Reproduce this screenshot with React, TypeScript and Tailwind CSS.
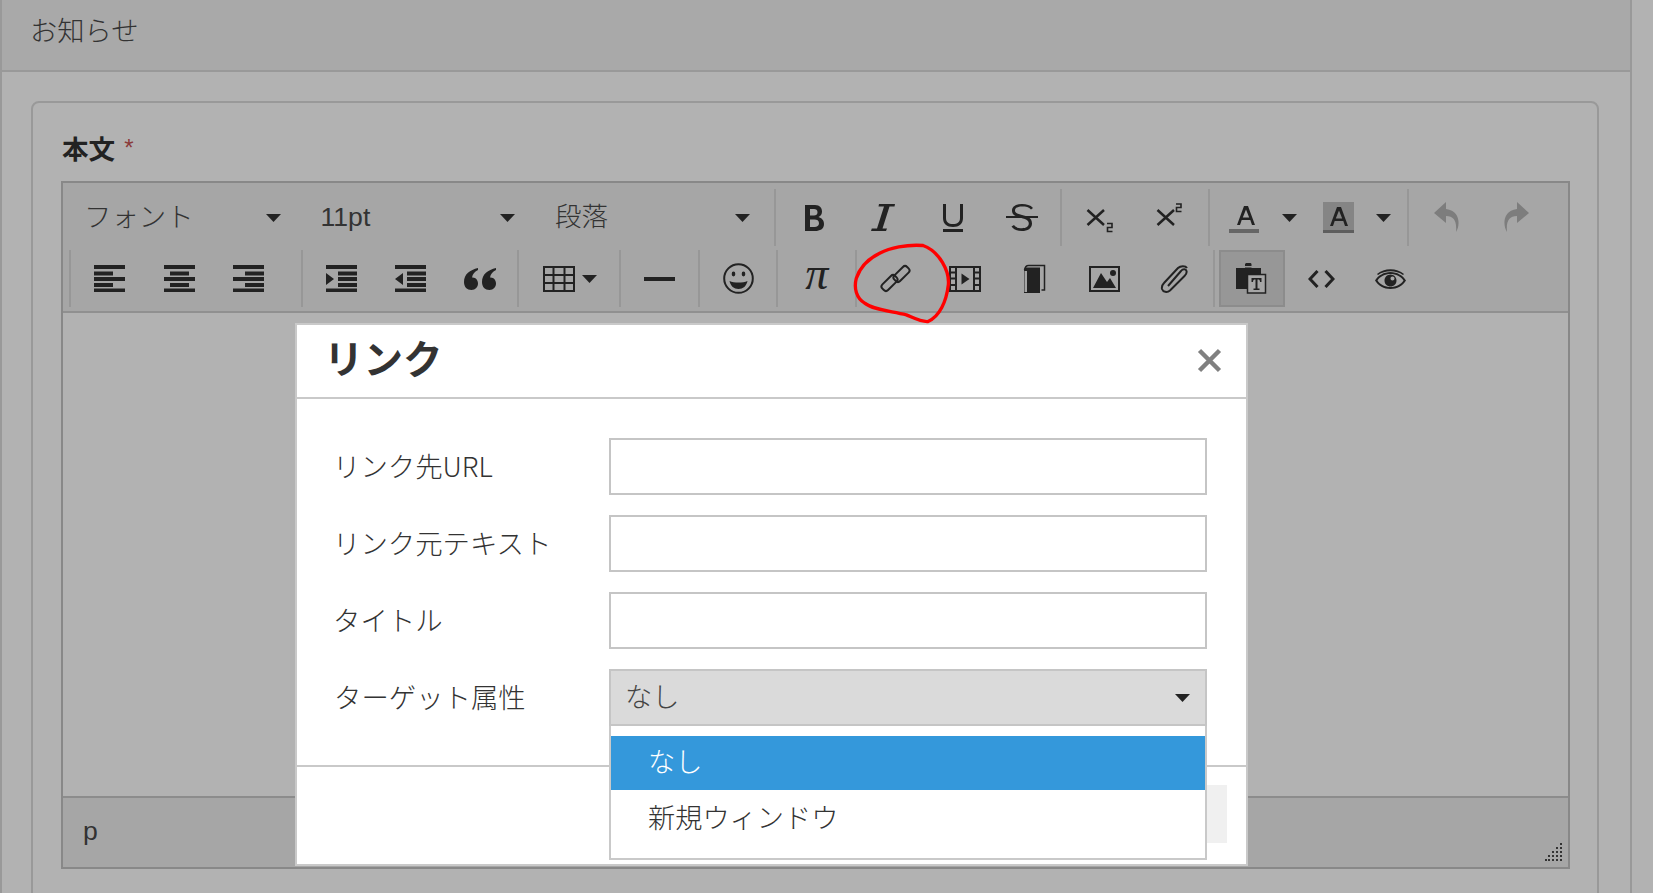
const JP = "font-['Noto_Sans_CJK_JP','Liberation_Sans',sans-serif]";

function Ic({ w, h, vb, children }: { w: number; h: number; vb?: string; children: React.ReactNode }) {
  return (
    <svg width={w} height={h} viewBox={vb ?? `0 0 ${w} ${h}`} fill="#222">
      {children}
    </svg>
  );
}

function Tb({ children, className = "w-[69.5px]" }: { children?: React.ReactNode; className?: string }) {
  return <div className={`${className} h-[57px] flex items-center justify-center shrink-0`}>{children}</div>;
}

function Sep({ className = "mx-1" }: { className?: string }) {
  return <div className={`${className} w-[2px] h-[57px] bg-[#979797] shrink-0`} />;
}

function Caret({ c = "" }: { c?: string }) {
  return (
    <svg width="15" height="8" viewBox="0 0 15 8" className={c}>
      <path d="M0 0H15L7.5 8Z" fill="#222" />
    </svg>
  );
}

function Sel({ label, c = "text-[26.6px] pl-[22px]" }: { label: string; c?: string }) {
  return (
    <div className={`${c} w-[234.5px] h-[57px] shrink-0 flex items-center justify-between pr-[18px] text-[#333] font-light`}>
      <span>{label}</span>
      <Caret />
    </div>
  );
}

const Lines = ({ d }: { d: string }) => (
  <Ic w={31} h={27}>
    <path d={d} />
  </Ic>
);

function Field({ label }: { label: string }) {
  return (
    <div className="flex items-center h-[57px] mb-[20px]">
      <div className="w-[312px] pl-[36px] text-[27.4px] leading-none text-[#333] font-light whitespace-nowrap pb-[2px]">{label}</div>
      <div className="border-2 w-[598px] h-[57px] border-[#c5c5c5] bg-white shrink-0" />
    </div>
  );
}

function AGlyph() {
  return <path fillRule="evenodd" d="M7 0H11L18 19H15L13.300 14H4.700L3 19H0ZM9 3.500L5.800 11.500H12.200Z" />;
}

export default function App() {
  return (
    <div className={`${JP} relative w-[1653px] h-[893px] overflow-hidden bg-[#b2b2b2] border-l-2 border-[#999]`}>
      <div className="w-[1630px] h-full border-r-2 border-[#999]">
        <div className="h-[72px] bg-[#a9a9a9] border-b-2 border-[#999] flex items-center pl-[28px] pb-[11px] text-[27.3px] text-[#333] font-light">
          お知らせ
        </div>
        <div className="pl-[29px] pt-[29px]">
          <div className="w-[1568px] h-[900px] rounded-t-lg border-2 border-[#999] pl-[28px] pt-[26px]">
            <div className="h-[38px] flex items-center pl-px text-[26.6px] font-bold text-[#222]">
              本文<span className="text-[#8a3a3a] font-normal text-[24px] ml-[9px] font-['Liberation_Sans']">*</span>
            </div>
            <div className="mt-[14px] w-[1509px] border-2 border-[#888]">
              <div className="h-[130px] bg-[#a6a6a6] border-b-2 border-[#909090] pt-[6px] flex flex-col gap-[4px]">
                <div className="flex items-center pl-px font-['Liberation_Sans','Noto_Sans_CJK_JP',sans-serif]">
                  <Sel label="フォント" c="text-[27.4px] pl-[20px]" />
                  <Sel label="11pt" />
                  <Sel label="段落" />
                  <Sep className="ml-[6.5px] mr-[3px]" />
                  <Tb>
                    <Ic w={20} h={28}>
                      <path fillRule="evenodd" d="M1 1H11C16 1 18 4 18 7.5C18 10 17 12 14.5 13C17.5 14 20 16 20 20C20 25 16 27 11 27H1ZM6 5V11.5H10C12 11.5 13.5 10.500 13.500 8.200C13.500 6 12 5 10 5ZM6 15.500V23H10.500C13 23 15 22 15 19.300C15 16.500 13 15.500 10.500 15.500Z" />
                    </Ic>
                  </Tb>
                  <Tb>
                    <Ic w={24} h={27}>
                      <path d="M8 0H24L23.500 2.500H18.500L11.500 24.500H16L15 27H0L.8 24.500H6L13 2.500H7.500Z" />
                    </Ic>
                  </Tb>
                  <Tb>
                    <Ic w={20} h={28}>
                      <path d="M0 0H3V14C3 18 5.500 20 10 20C14.500 20 17 18 17 14V0H20V14C20 20 16 23 10 23C4 23 0 20 0 14ZM0 25H20V28.500H0Z" />
                    </Ic>
                  </Tb>
                  <Tb>
                    <Ic w={32} h={28}>
                      <path d="M25 5.500C23 3 20 2.500 16 2.500C12 2.500 9 4 9 6.500C9 9.500 13 10 16 11C21 12 26 13.500 26 19.500C26 24.500 21.500 27 16 27C11.500 27 8 26 5.500 22.500L8 21C9.800 23.500 12.500 24.200 16 24.200C20 24.200 22.800 22.600 22.800 19.500C22.800 16 19 15 15.500 14C11 13 6 11.500 6 6.500C6 2 10.500 0 16 0C20.500 0 24.500 1 27 4Z" />
                      <rect x="0" y="12" width="32" height="2" />
                    </Ic>
                  </Tb>
                  <Sep className="ml-[3px] mr-[3px]" />
                  <Tb>
                    <Ic w={27} h={30}>
                      <path d="M1.500 7L18 22M18 7L1.500 22" stroke="#222" strokeWidth="2.500" fill="none" />
                      <path d="M21 20.500H26V24.500H21.500V28.500H26.500" stroke="#222" strokeWidth="1.600" fill="none" />
                    </Ic>
                  </Tb>
                  <Tb>
                    <Ic w={26} h={30}>
                      <path d="M1.500 7L18 22M18 7L1.500 22" stroke="#222" strokeWidth="2.500" fill="none" />
                      <path d="M20 1H25V4.500H20.500V8.500H25.500" stroke="#222" strokeWidth="1.600" fill="none" />
                    </Ic>
                  </Tb>
                  <Sep className="ml-[4px] mr-[3px]" />
                  <div className="w-[95px] h-[57px] shrink-0 flex items-center pl-[16px] gap-[23px]">
                    <Ic w={30} h={31}>
                      <g transform="translate(8 4)">
                        <AGlyph />
                      </g>
                      <rect y="27" width="30" height="4" fill="#666" />
                    </Ic>
                    <Caret />
                  </div>
                  <div className="w-[97px] h-[57px] shrink-0 flex items-center pl-[15px] gap-[22px]">
                    <div className="w-[31px] h-[31px] bg-[#858585]">
                      <svg width="31" height="31" viewBox="0 0 31 31" fill="#222">
                        <g transform="translate(7 5)">
                          <AGlyph />
                        </g>
                        <rect y="28" width="31" height="3" fill="#5e5e5e" />
                      </svg>
                    </div>
                    <Caret />
                  </div>
                  <Sep className="ml-[2px] mr-[3px]" />
                  <Tb>
                    <Ic w={26} h={31}>
                      <path d="M12 0L0 11L12 21V14C20 14 23 19 22 30C26 24 27 9 12 7Z" fill="#7d7d7d" />
                    </Ic>
                  </Tb>
                  <Tb>
                    <Ic w={26} h={31}>
                      <path d="M14 0L26 11L14 21V14C6 14 3 19 4 30C0 24 -1 9 14 7Z" fill="#7d7d7d" />
                    </Ic>
                  </Tb>
                </div>
                <div className="flex items-center pl-[6px] font-['Liberation_Serif','Noto_Sans_CJK_JP',serif]">
                  <Sep className="ml-0 mr-[4px]" />
                  <Tb>
                    <Lines d="M0 0H31V4H0ZM0 6.500H19V10.500H0ZM0 12H31V16H0ZM0 18H19V22H0ZM0 23.500H31V27.500H0Z" />
                  </Tb>
                  <Tb>
                    <Lines d="M0 0H31V4H0ZM6 6.500H25V10.500H6ZM0 12H31V16H0ZM6 18H25V22H6ZM0 23.500H31V27.500H0Z" />
                  </Tb>
                  <Tb>
                    <Lines d="M0 0H31V4H0ZM12 6.500H31V10.500H12ZM0 12H31V16H0ZM12 18H31V22H12ZM0 23.500H31V27.500H0Z" />
                  </Tb>
                  <Sep className="ml-[17px] mr-[4px]" />
                  <Tb>
                    <Lines d="M0 0H31V4H0ZM12 6.500H31V10.500H12ZM12 12H31V16H12ZM12 18H31V22H12ZM0 23.500H31V27.500H0ZM0 8L8 14L0 20Z" />
                  </Tb>
                  <Tb>
                    <Lines d="M0 0H31V4H0ZM12 6.500H31V10.500H12ZM12 12H31V16H12ZM12 18H31V22H12ZM0 23.500H31V27.500H0ZM8 8L0 14L8 20Z" />
                  </Tb>
                  <Tb>
                    <Ic w={32} h={22}>
                      <path d="M14 0C6 2 0 6 0 14C0 19 3 22 7.500 22C11.500 22 14 19 14 15.500C14 12 11.500 9 8 9.500C8.500 6 11 3.500 14 2ZM32 0C24 2 18 6 18 14C18 19 21 22 25.500 22C29.500 22 32 19 32 15.500C32 12 29.500 9 26 9.500C26.500 6 29 3.500 32 2Z" />
                    </Ic>
                  </Tb>
                  <Sep className="ml-[2px] mr-[0px]" />
                  <div className="w-[96px] h-[57px] shrink-0 flex items-center pl-[24px] gap-[7px]">
                    <Ic w={32} h={26}>
                      <path fillRule="evenodd" d="M0 0H32V26H0ZM2 2V8H9.500V2ZM11.500 2V8H20.500V2ZM22.500 2V8H30V2ZM2 10V16H9.500V10ZM11.500 10V16H20.500V10ZM22.500 10V16H30V10ZM2 18V24H9.500V18ZM11.500 18V24H20.500V18ZM22.500 18V24H30V18Z" />
                    </Ic>
                    <Caret />
                  </div>
                  <Sep className="mx-1" />
                  <Tb>
                    <Ic w={31} h={4}>
                      <rect width="31" height="4" />
                    </Ic>
                  </Tb>
                  <Sep className="ml-[3px] mr-[4px]" />
                  <Tb>
                    <Ic w={31} h={31}>
                      <circle cx="15.500" cy="15.500" r="14.300" fill="none" stroke="#222" strokeWidth="2" />
                      <ellipse cx="10.500" cy="11" rx="1.800" ry="2.400" />
                      <ellipse cx="20.500" cy="11" rx="1.800" ry="2.400" />
                      <path d="M6.500 18C11 20 20 20 24.500 18C23.500 23 20 26 15.500 26C11 26 7.500 23 6.500 18Z" />
                    </Ic>
                  </Tb>
                  <Sep className="ml-[3px] mr-[4px]" />
                  <Tb>
                    <span className="italic text-[46px] leading-none text-[#222] pb-[9px]">π</span>
                  </Tb>
                  <Sep className="ml-[3.500px] mr-[3.500px]" />
                  <Tb>
                    <Ic w={31} h={31}>
                      <g fill="none" stroke="#222" strokeWidth="2">
                        <rect x=".5" y="16" width="18" height="8" rx="3" transform="rotate(-45 9.500 20)" />
                        <rect x="12.500" y="7" width="18" height="8" rx="3" transform="rotate(-45 21.500 11)" />
                      </g>
                    </Ic>
                  </Tb>
                  <Tb>
                    <Ic w={32} h={26}>
                      <path fillRule="evenodd" d="M0 0H32V26H0ZM2 2V5.500H6V2ZM2 7.500V11.500H6V7.500ZM2 13.500V18H6V13.500ZM2 20V24H6V20ZM26 2V5.500H30V2ZM26 7.500V11.500H30V7.500ZM26 13.500V18H30V13.500ZM26 20V24H30V20ZM8 2V24H24V2Z" />
                      <path d="M12.500 7.500L20.500 13L12.500 18.500Z" />
                    </Ic>
                  </Tb>
                  <Tb className="w-[70px]">
                    <Ic w={23} h={30}>
                      <path d="M1 7V29H17V3.500H3C2 3.500 1 4.500 1 7Z" />
                      <path d="M1.500 6C2 3 3 1.500 5.500 1.500H21.500V26H18.500" fill="none" stroke="#222" strokeWidth="1.500" />
                      <path d="M1.500 7H4V28H1.500Z" fill="#a6a6a6" />
                    </Ic>
                  </Tb>
                  <Tb>
                    <Ic w={31} h={26}>
                      <path fillRule="evenodd" d="M0 0H31V26H0ZM2 2V24H29V2Z" />
                      <circle cx="24" cy="7" r="3" />
                      <path d="M4 22L12 7L18 16L21 12L27 22Z" />
                    </Ic>
                  </Tb>
                  <Tb>
                    <Ic w={28} h={28}>
                      <path d="M8 21L21 6C23 3.500 26 4 26.500 6C27 8 26 9.500 24.500 11L10 25.500C7 28 3 27 2 24C1.500 21.500 2.500 19.500 4 18L18 3C20.500 .5 25.500 .5 27 3" fill="none" stroke="#222" strokeWidth="2" />
                    </Ic>
                  </Tb>
                  <Sep className="ml-[4px] mr-[4px]" />
                  <div className="w-[66px] h-[57px] shrink-0 bg-[#979797] border-2 border-[#8c8c8c] flex items-center justify-center">
                    <Ic w={31} h={31}>
                      <path d="M0 5H9V1.500C9 .5 10 0 10.500 0H14C15 0 15.500 .5 15.500 1.500V5H25V11H11V26H0Z" />
                      <rect x="5" y="3" width="15" height="1.500" fill="#979797" />
                      <rect x="11.500" y="11.500" width="18" height="18.500" fill="#a6a6a6" stroke="#222" strokeWidth="1.500" />
                      <path d="M15.500 15H25.500V19H24C24 17.500 23.500 16.500 22.500 16.500H21.500V25.500H23.500V27H17.500V25.500H19.500V16.500H18.500C17.500 16.500 17 17.500 17 19H15.500Z" />
                    </Ic>
                  </div>
                  <Tb className="w-[67.5px] ml-[3.500px]">
                    <Ic w={27} h={18}>
                      <path d="M9.500 1L2 9L9.500 17M17.500 1L25 9L17.500 17" fill="none" stroke="#222" strokeWidth="3" />
                    </Ic>
                  </Tb>
                  <Tb>
                    <Ic w={31} h={20}>
                      <path fillRule="evenodd" d="M15.500 3C22 3 28 6.500 31 11.500C28 16.500 22 20 15.500 20C9 20 3 16.500 0 11.500C3 6.500 9 3 15.500 3ZM15.500 5C10 5 5 7.500 2.500 11.500C5 15.500 10 18 15.500 18C21 18 26 15.500 28.500 11.500C26 7.500 21 5 15.500 5Z" />
                      <path d="M2 5C9 -1.500 22 -1.500 29 5L28 6C21 1 10 1 3 6Z" />
                      <path fillRule="evenodd" d="M15.500 5.500C19 5.500 21.500 8.300 21.500 11.500C21.500 15 19 17.500 15.500 17.500C12 17.500 9.500 15 9.500 11.500C9.500 8.300 12 5.500 15.500 5.500ZM17.500 7.500C16.300 7.500 15.500 8.300 15.500 9.500C15.500 10.700 16.300 11.500 17.500 11.500C18.700 11.500 19.500 10.700 19.500 9.500C19.500 8.300 18.700 7.500 17.500 7.500Z" />
                    </Ic>
                  </Tb>
                </div>
              </div>
              <div className="h-[485px] bg-[#b2b2b2] border-b-2 border-[#8c8c8c]" />
              <div className="relative h-[69px] bg-[#a6a6a6] flex items-center pl-[20px] font-['Liberation_Sans'] text-[26.6px] text-[#333] pb-[2px]">
                p
                <svg width="18" height="18" viewBox="0 0 18 18" className="absolute right-[5px] bottom-[6px]" fill="#333">
                  {[[15,0],[15,4],[11,4],[15,8],[11,8],[7,8],[15,12],[11,12],[7,12],[3,12],[15,16],[11,16],[7,16],[3,16],[0,16]].map(([x, y], i) => (
                    <rect key={i} x={x} y={y} width="2" height="2" />
                  ))}
                </svg>
              </div>
            </div>
          </div>
        </div>
      </div>

      {/* Modal */}
      <div className="absolute left-[293px] top-[323px] w-[953px] h-[543px] bg-white border-2 border-[#c9c9c9]">
        <div className="h-[74px] border-b-2 border-[#c9c9c9] flex items-center justify-between pl-[27px] pr-[24px]">
          <span className="text-[39.500px] font-bold text-[#333] leading-none pb-[8px]">リンク</span>
          <svg width="25" height="25" viewBox="0 0 25 25" className="mb-[2px]">
            <path d="M2.500 2.500L22.500 22.500M22.500 2.500L2.500 22.500" stroke="#808080" strokeWidth="4.500" />
          </svg>
        </div>
        <div className="h-[368px] border-b-2 border-[#c9c9c9] pt-[39px]">
          <Field label="リンク先URL" />
          <Field label="リンク元テキスト" />
          <Field label="タイトル" />
        </div>
        <div className="relative h-[97px]">
          <div className="absolute right-[19px] top-[18px] w-[40px] h-[58px] bg-[#f0f0f0]">
            <div className="absolute left-[1px] top-[27px] w-[3px] h-[4px] bg-[#555]" />
          </div>
        </div>
      </div>

      {/* Select with open list */}
      <div className="absolute left-[332px] top-[669px] w-[873px]">
        <div className="flex items-center h-[57px]">
          <div className="w-[275px] text-[27.4px] leading-none text-[#333] font-light whitespace-nowrap pb-[2px]">ターゲット属性</div>
          <div className="w-[598px] h-[57px] bg-[#dadada] border-2 border-[#c5c5c5] flex items-center justify-between pl-[14px] pr-[15px] pb-[4px] text-[27.2px] text-[#444] font-light">
            <span>なし</span>
            <Caret c="mt-[4px]" />
          </div>
        </div>
        <div className="absolute left-[275px] top-[57px] w-[598px] h-[134px] bg-white border-2 border-t-0 border-[#c9c9c9] pt-[10px]">
          <div className="h-[54px] bg-[#3498db] text-white flex items-center pl-[37px] pb-[5px] text-[27.2px] font-light">なし</div>
          <div className="h-[54px] text-[#333] flex items-center pl-[37px] pb-[2px] text-[27.2px] font-light">新規ウィンドウ</div>
        </div>
      </div>

      {/* Red hand-drawn circle */}
      <svg width="100" height="82" viewBox="880 25 300 245" className="absolute left-[851px] top-[243px]" fill="none">
        <path d="M1090 32C1040 28 990 40 960 55C925 72 900 100 890 130C882 160 890 190 915 205C940 225 990 228 1040 240C1060 248 1085 262 1105 260C1140 245 1160 200 1166 150C1170 110 1140 50 1090 32Z" stroke="#f00" strokeWidth="10" />
      </svg>
    </div>
  );
}
